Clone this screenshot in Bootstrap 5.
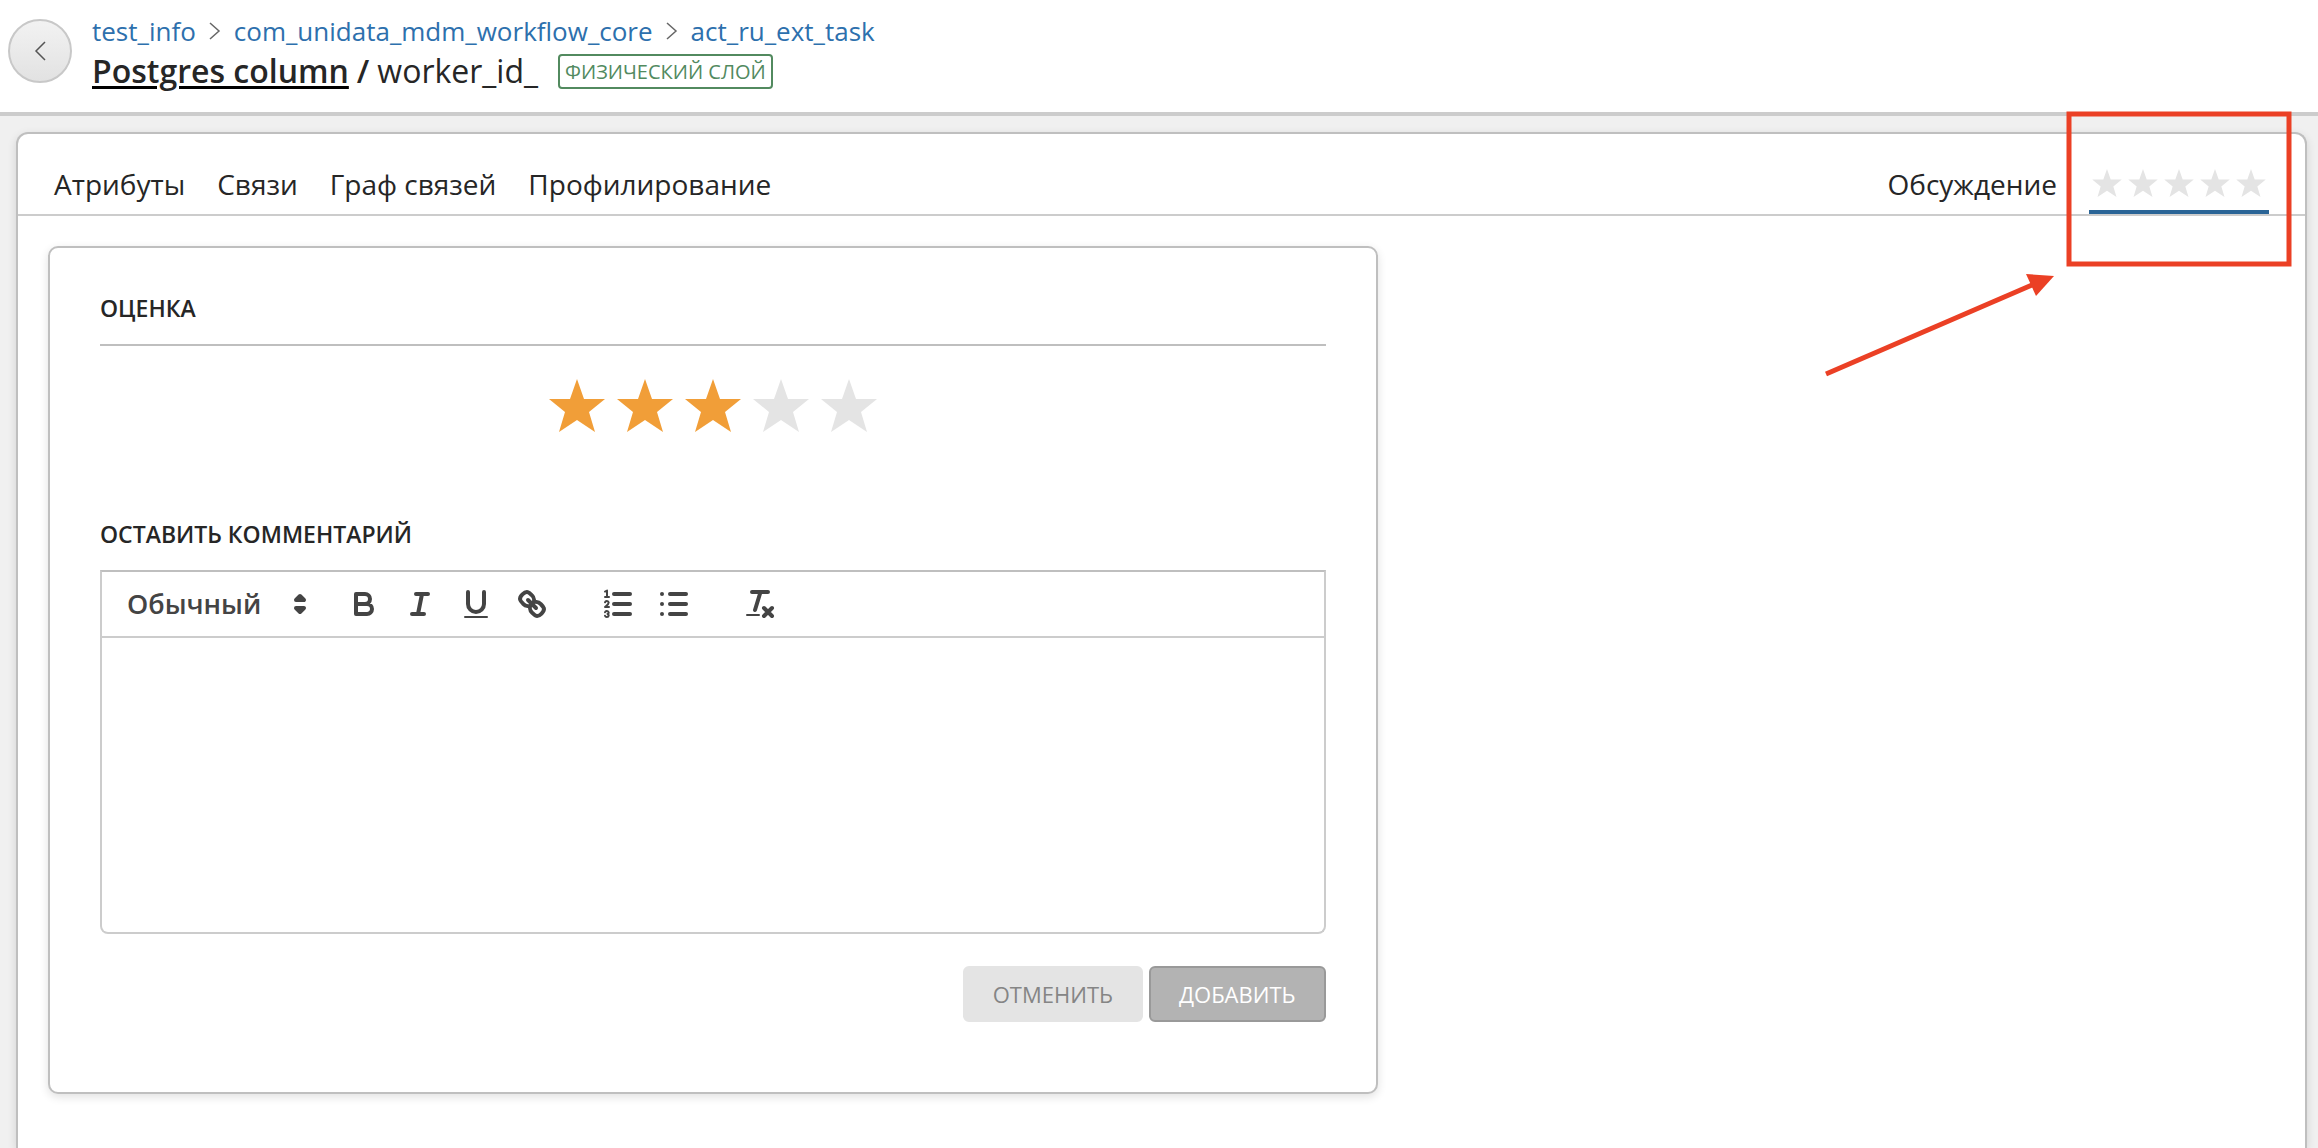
<!DOCTYPE html>
<html lang="ru">
<head>
<meta charset="utf-8">
<meta name="viewport" content="width=device-width, initial-scale=1">
<title>worker_id_</title>
<link href="https://cdn.jsdelivr.net/npm/bootstrap@5.3.0/dist/css/bootstrap.min.css" rel="stylesheet">
<style>
  body { background: #f0f0f0; color: #262626; font-family: "Open Sans", "Noto Sans", sans-serif; font-size: 26px; line-height: 40px; }
  a { text-decoration: none; }
  .page { min-height: 100vh; overflow: hidden; }
  .page-head { padding: 11px 8px 21px; border-bottom: 4px solid #ccc; gap: 20px; }
  .back-btn { width: 64px; height: 64px; border: 2px solid #c8c8c8; background: linear-gradient(#f2f2f2, #e2e2e2); }
  .crumbs { gap: 13px; }
  .crumbs a { color: #2d70ad; }
  .obj-title { font-size: 32px; line-height: 40px; gap: 8px; }
  .obj-title a { color: #262626; text-decoration: underline #000 3px; text-underline-offset: 3px; }
  .layer-tag { margin-left: 12px; padding: 0 5px; font-size: 20px; line-height: 31px; color: #528a5f; border: 2px solid #528a5f; border-radius: 4px; }
  .panel { background: #fff; border: 2px solid #bfbfbf; box-shadow: 0 3px 10px rgba(0, 0, 0, .12); }
  .outer-panel { margin: 16px 11px 0 16px; border-radius: 12px 12px 0 0; border-bottom: 0; }
  .tab-bar { padding: 30px 36px 0; gap: 32px; font-size: 28px; border-bottom: 2px solid #ccc; }
  .tab-bar a { color: #262626; padding-bottom: 6px; border-bottom: 4px solid transparent; }
  .tab-bar a.active { border-bottom-color: #2a6496; }
  .tab-body { padding: 30px; }
  .rate-panel { width: 59.7%; padding: 44px 50px 70px; border-radius: 10px; }
  .sec-title { font-size: 23px; line-height: 32px; font-weight: 600; margin: 0; padding-bottom: 20px; }
  .ruled { border-bottom: 2px solid #bfbfbf; }
  .stars { padding: 33px 0 86px; }
  .stars label { width: 68px; line-height: 0; text-align: center; color: #e4e4e4; cursor: pointer; }
  .stars label.on { color: #f19e38; }
  .editor { border: 2px solid #ccc; border-top-color: #bfbfbf; border-radius: 0 0 8px 8px; }
  .tool-row { padding: 0 16px; height: 66px; border-bottom: 2px solid #ccc; color: #444; }
  .style-pick { width: 200px; margin-right: 18px; }
  .style-pick select { appearance: none; width: 100%; height: 48px; padding: 0 40px 0 9px; border: 0; background: none; color: #444; font-size: 27px; line-height: 40px; font-weight: 600; }
  .style-pick svg { right: 0; top: 6px; pointer-events: none; }
  .tool { width: 56px; height: 48px; padding: 0; border: 0; background: none; color: #444; }
  .tool-gap { margin-left: 30px; }
  .tool svg, .style-pick svg { width: 36px; height: 36px; fill: none; stroke: #444; stroke-width: 2; stroke-linecap: round; stroke-linejoin: round; display: block; margin: auto; }
  .style-pick .solid { fill: #444; }
  .tool svg .bare { fill: #444; stroke: none; }
  .tool svg .thin { stroke-width: 1; }
  .editor textarea { height: 294px; border: 0; resize: none; padding: 16px 24px; background: none; font-size: 26px; }
  .actions { margin-top: 32px; gap: 6px; }
  .actions .btn { --bs-btn-padding-x: 28px; --bs-btn-padding-y: 7px; --bs-btn-border-width: 2px; --bs-btn-border-radius: 6px; --bs-btn-font-size: 22px; --bs-btn-line-height: 38px; }
  .btn-cancel { --bs-btn-bg: #e4e4e4; --bs-btn-border-color: #e4e4e4; --bs-btn-color: #858585; }
  .btn-add { --bs-btn-bg: #b3b3b3; --bs-btn-border-color: #999; --bs-btn-color: #fff; }
  .callout-mark { top: 111px; right: 26px; pointer-events: none; }
</style>
<script src="https://cdn.jsdelivr.net/npm/bootstrap@5.3.0/dist/js/bootstrap.bundle.min.js"></script>
</head>
<body>
<svg width="0" height="0" class="position-absolute" aria-hidden="true">
  <symbol id="star" viewBox="0 0 56 53"><path fill="currentColor" d="M28 0l7 20h21L40 33l6 20-18-12-18 12 6-20L0 20h21z"/></symbol>
</svg>
<div class="page position-relative d-flex flex-column">
  <header class="page-head bg-white d-flex align-items-center">
    <button type="button" class="back-btn rounded-circle p-0 d-flex align-items-center justify-content-center flex-shrink-0" aria-label="Назад">
      <svg width="12" height="20" viewBox="0 0 12 20" fill="none" stroke="#555" stroke-width="1.5"><path d="M11 1L2 10l9 9"/></svg>
    </button>
    <div>
      <nav class="crumbs d-flex align-items-center" aria-label="Путь">
        <a href="#">test_info</a>
        <svg width="12" height="18" viewBox="0 0 12 18" fill="none" stroke="#666" stroke-width="1.5"><path d="M1 1l9 8-9 8"/></svg>
        <a href="#">com_unidata_mdm_workflow_core</a>
        <svg width="12" height="18" viewBox="0 0 12 18" fill="none" stroke="#666" stroke-width="1.5"><path d="M1 1l9 8-9 8"/></svg>
        <a href="#">act_ru_ext_task</a>
      </nav>
      <h1 class="obj-title d-flex align-items-center m-0 fw-normal">
        <a href="#" class="fw-semibold">Postgres column</a><span class="fw-semibold">/</span><span>worker_id_</span>
        <span class="layer-tag">ФИЗИЧЕСКИЙ СЛОЙ</span>
      </h1>
    </div>
  </header>

  <main class="outer-panel panel flex-grow-1">
    <nav class="tab-bar d-flex">
      <a href="#">Атрибуты</a>
      <a href="#">Связи</a>
      <a href="#">Граф связей</a>
      <a href="#">Профилирование</a>
      <a href="#" class="ms-auto">Обсуждение</a>
      <a href="#" class="active d-flex" aria-label="Оценка">
        <svg width="180" height="40" viewBox="0 0 180 40" color="#e4e4e4" aria-hidden="true">
          <use href="#star" x="3" y="5" width="30" height="28"/><use href="#star" x="39" y="5" width="30" height="28"/><use href="#star" x="75" y="5" width="30" height="28"/><use href="#star" x="111" y="5" width="30" height="28"/><use href="#star" x="147" y="5" width="30" height="28"/>
        </svg>
      </a>
    </nav>
    <div class="tab-body">
      <section class="rate-panel panel">
        <h2 class="sec-title ruled">ОЦЕНКА</h2>
        <div class="stars d-flex justify-content-center" role="radiogroup" aria-label="Оценка">
          <input class="visually-hidden" type="radio" name="rate" id="r1"><label for="r1" class="on" aria-label="1"><svg width="56" height="53"><use href="#star"/></svg></label>
          <input class="visually-hidden" type="radio" name="rate" id="r2"><label for="r2" class="on" aria-label="2"><svg width="56" height="53"><use href="#star"/></svg></label>
          <input class="visually-hidden" type="radio" name="rate" id="r3" checked><label for="r3" class="on" aria-label="3"><svg width="56" height="53"><use href="#star"/></svg></label>
          <input class="visually-hidden" type="radio" name="rate" id="r4"><label for="r4" aria-label="4"><svg width="56" height="53"><use href="#star"/></svg></label>
          <input class="visually-hidden" type="radio" name="rate" id="r5"><label for="r5" aria-label="5"><svg width="56" height="53"><use href="#star"/></svg></label>
        </div>
        <h2 class="sec-title"><label for="comment">ОСТАВИТЬ КОММЕНТАРИЙ</label></h2>
        <div class="editor">
          <div class="tool-row d-flex align-items-center">
            <div class="style-pick position-relative">
              <select aria-label="Стиль текста"><option>Обычный</option></select>
              <svg class="position-absolute" viewBox="0 0 18 18"><path class="solid" d="M7 11l2 2 2-2zM7 7l2-2 2 2z"/></svg>
            </div>
            <button type="button" class="tool" aria-label="Полужирный"><svg viewBox="0 0 18 18"><path d="M5 4h4.500A2.500 2.500 0 0 1 12 6.500 2.500 2.500 0 0 1 9.500 9H5zM5 9h5.500A2.500 2.500 0 0 1 13 11.500 2.500 2.500 0 0 1 10.500 14H5z"/></svg></button>
            <button type="button" class="tool" aria-label="Курсив"><svg viewBox="0 0 18 18"><path d="M7 4h6M5 14h6M8 14l2-10"/></svg></button>
            <button type="button" class="tool" aria-label="Подчёркнутый"><svg viewBox="0 0 18 18"><path d="M5 3v6a4 4 0 0 0 8 0V3"/><rect class="bare" x="3" y="15" width="12" height="1" rx=".5"/></svg></button>
            <button type="button" class="tool" aria-label="Ссылка"><svg viewBox="0 0 18 18"><path d="M7 7l4 4M8.900 4.577a3.476 3.476 0 0 1 .36 4.679A3.476 3.476 0 0 1 4.577 8.900C3.185 7.500 2.035 6.400 4.217 4.217S7.500 3.185 8.900 4.577zM13.423 9.100a3.476 3.476 0 0 0-4.679-.36 3.476 3.476 0 0 0 .36 4.679c1.392 1.392 2.500 2.542 4.679.36s1.031-3.287-.36-4.679z"/></svg></button>
            <button type="button" class="tool tool-gap" aria-label="Нумерованный список"><svg viewBox="0 0 18 18"><path d="M7 4h8M7 9h8M7 14h8"/><path class="thin" d="M2.500 5.500h2"/><path class="bare" d="M3.500 6a.5.5 0 0 1-.5-.5V3.085l-.276.138a.5.5 0 0 1-.447-.895l1-.5A.5.5 0 0 1 4 2.275V5.500a.5.5 0 0 1-.5.500z"/><path class="thin" d="M4.500 10.500h-2c0-.234 1.850-1.076 1.850-2.234A.959.959 0 0 0 2.500 8.156M2.500 14.846a.959.959 0 0 0 1.850-.109A.7.700 0 0 0 3.750 14a.688.688 0 0 0 .6-.736.959.959 0 0 0-1.850-.109"/></svg></button>
            <button type="button" class="tool" aria-label="Маркированный список"><svg viewBox="0 0 18 18"><path d="M7 4h8M7 9h8M7 14h8"/><circle class="bare" cx="3" cy="4" r="1"/><circle class="bare" cx="3" cy="9" r="1"/><circle class="bare" cx="3" cy="14" r="1"/></svg></button>
            <button type="button" class="tool tool-gap" aria-label="Очистить форматирование"><svg viewBox="0 0 18 18"><path d="M5 3h8M6.500 12L9.100 3.500M11 11l4 4M15 11l-4 4"/><rect class="bare" x="2" y="14" width="7" height="1" rx=".5"/></svg></button>
          </div>
          <textarea id="comment" class="form-control shadow-none"></textarea>
        </div>
        <div class="actions d-flex justify-content-end">
          <button type="button" class="btn btn-cancel">ОТМЕНИТЬ</button>
          <button type="button" class="btn btn-add">ДОБАВИТЬ</button>
        </div>
      </section>
    </div>
  </main>

  <svg class="callout-mark position-absolute" width="472" height="270" viewBox="0 0 472 270" aria-hidden="true">
    <rect x="249" y="3" width="220" height="150" fill="none" stroke="#eb4025" stroke-width="5"/>
    <path d="M6 263L212 174" stroke="#eb4025" stroke-width="5"/>
    <path d="M206 163l28 2-18 20z" fill="#eb4025"/>
  </svg>
</div>
</body>
</html>
